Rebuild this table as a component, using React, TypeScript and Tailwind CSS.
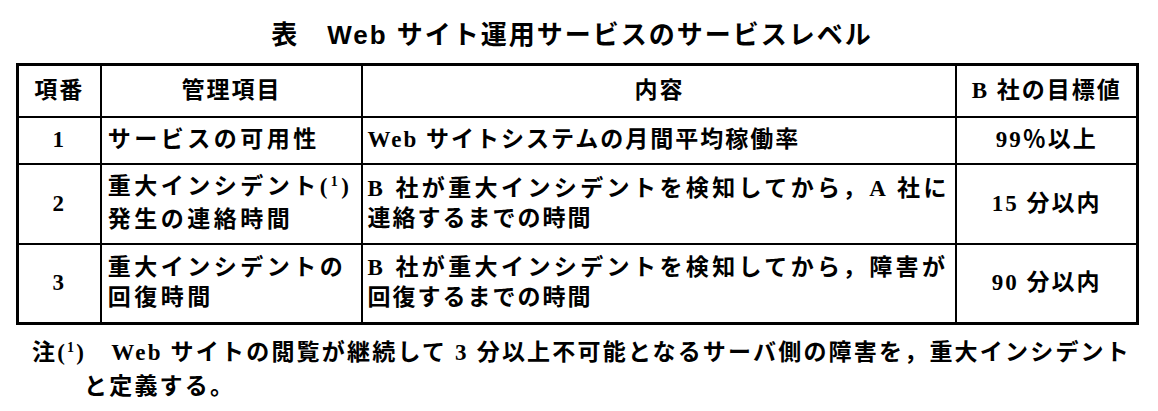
const jp = "font-['Liberation_Serif','Noto_Sans_CJK_JP',serif]"

function Sup({ n }: { n: string }) {
  return <span className="relative -top-[8px] text-[14px]">{n}</span>
}

export default function App() {
  return (
    <div className={`w-[1158px] h-[411px] bg-white text-black ${jp} font-bold`}>
      <h1 className="pt-[17px] pr-[14px] text-center text-[26px] leading-[36px] tracking-[2px] font-['Liberation_Sans','Noto_Sans_CJK_JP',sans-serif]">
        表　Web サイト運用サービスのサービスレベル
      </h1>

      <table className="ml-[16px] mt-[10px] w-[1123px] border-collapse border-[3px] border-black text-[23px] tracking-[2px]">
        <colgroup>
          <col className="w-[84px]" />
          <col className="w-[262px]" />
          <col className="w-[594px]" />
          <col className="w-[183px]" />
        </colgroup>
        <thead>
          <tr className="h-[52px]">
            <th className="border-2 border-black text-center">項番</th>
            <th className="border-2 border-black text-center">管理項目</th>
            <th className="border-2 border-black text-center">内容</th>
            <th className="border-2 border-black text-center">B 社の目標値</th>
          </tr>
        </thead>
        <tbody className="leading-[30px]">
          <tr className="h-[47px]">
            <td className="border-2 border-black text-center">1</td>
            <td className="border-2 border-black px-[6px] tracking-[3.5px]">サービスの可用性</td>
            <td className="border-2 border-black px-[4px]">Web サイトシステムの月間平均稼働率</td>
            <td className="border-2 border-black text-center">99％以上</td>
          </tr>
          <tr className="h-[80px]">
            <td className="border-2 border-black text-center">2</td>
            <td className="border-2 border-black pl-[6px] pr-0 whitespace-nowrap tracking-[3.5px]">
              重大インシデント(<Sup n="1" />)
              <br />
              発生の連絡時間
            </td>
            <td className="border-2 border-black px-[4px]">
              <div className="whitespace-nowrap tracking-[3.4px]">B 社が重大インシデントを検知してから，A 社に</div>
              <div>連絡するまでの時間</div>
            </td>
            <td className="border-2 border-black text-center">15 分以内</td>
          </tr>
          <tr className="h-[80px]">
            <td className="border-2 border-black text-center">3</td>
            <td className="border-2 border-black px-[6px] tracking-[3.5px]">
              重大インシデントの
              <br />
              回復時間
            </td>
            <td className="border-2 border-black px-[4px]">
              <div className="whitespace-nowrap tracking-[3.4px]">B 社が重大インシデントを検知してから，障害が</div>
              <div>回復するまでの時間</div>
            </td>
            <td className="border-2 border-black text-center">90 分以内</td>
          </tr>
        </tbody>
      </table>

      <p className="mt-[12px] pl-[84px] -indent-[52px] text-[23px] leading-[31px] tracking-[2.2px] whitespace-nowrap">
        注(<Sup n="1" />)　Web サイトの閲覧が継続して 3 分以上不可能となるサーバ側の障害を，重大インシデント
        <br />
        と定義する。
      </p>
    </div>
  )
}
